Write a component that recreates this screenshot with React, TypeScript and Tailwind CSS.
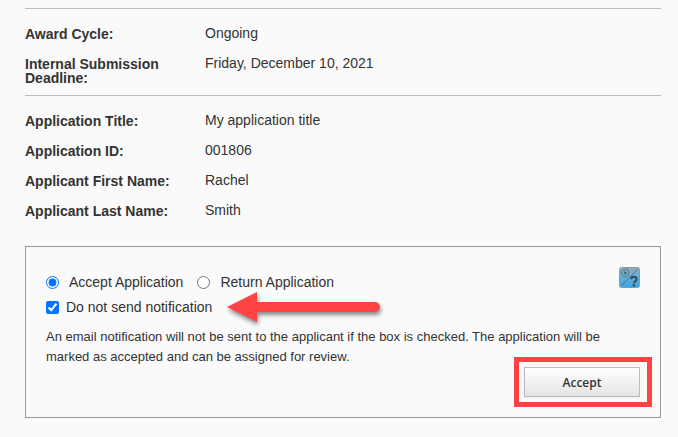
import { useState } from 'react';

type Detail = { label: string; value: string };

const cycleDetails: Detail[] = [
  { label: 'Award Cycle:', value: 'Ongoing' },
  { label: 'Internal Submission Deadline:', value: 'Friday, December 10, 2021' },
];

const applicationDetails: Detail[] = [
  { label: 'Application Title:', value: 'My application title' },
  { label: 'Application ID:', value: '001806' },
  { label: 'Applicant First Name:', value: 'Rachel' },
  { label: 'Applicant Last Name:', value: 'Smith' },
];

const DetailList = ({ items }: { items: Detail[] }) => (
  <dl className="flex flex-col gap-4 border-t border-[#bbb] pt-[18px]">
    {items.map(({ label, value }) => (
      <div key={label} className="flex items-start">
        <dt className="w-[180px] shrink-0 pr-4 font-bold leading-[14px]">{label}</dt>
        <dd className="leading-3">{value}</dd>
      </div>
    ))}
  </dl>
);

const HelpIcon = () => (
  <svg viewBox="0 0 21 21" className="size-[21px]" aria-hidden="true">
    <defs>
      <linearGradient id="help-fill" x1="0" y1="0" x2="0" y2="1">
        <stop offset="0" stopColor="#93a9b8" />
        <stop offset="0.45" stopColor="#6aaed2" />
        <stop offset="1" stopColor="#35a8e4" />
      </linearGradient>
    </defs>
    <rect x="0.5" y="0.5" width="20" height="20" rx="2" fill="url(#help-fill)" stroke="#7d9caf" />
    <path d="M2.5 18.5 18.5 2.5" stroke="#45677c" strokeWidth="0.9" />
    <circle cx="6.3" cy="6" r="3.8" fill="none" stroke="#547a92" strokeWidth="1" />
    <path d="M5.2 4v4l3.2-2z" fill="#3f647b" />
    <path d="M12.2 12.2c0-3.4 5.4-3.4 5.4 0 0 2.2-2.7 2-2.7 4" fill="none" stroke="#34495a" strokeWidth="2" />
    <circle cx="14.9" cy="18.2" r="1.2" fill="#34495a" />
  </svg>
);

const Arrow = () => (
  <svg
    viewBox="0 0 154 32"
    className="pointer-events-none absolute left-full top-1/2 ml-[15px] h-8 w-[154px] -translate-y-1/2 overflow-visible drop-shadow-[1px_3px_2px_rgba(0,0,0,0.45)]"
    aria-hidden="true"
  >
    <path d="M0 16 30 1v10h118a5 5 0 0 1 0 10H30v10z" fill="#ff4343" />
  </svg>
);

const App = () => {
  const [decision, setDecision] = useState('accept');
  const [silent, setSilent] = useState(true);

  return (
    <main className="min-h-screen bg-[#fafafa] pb-5 pl-[25px] pr-[17px] pt-2 font-['Liberation_Sans',Arial,sans-serif] text-sm text-[#333]">
      <DetailList items={cycleDetails} />
      <div className="mt-[10px]">
        <DetailList items={applicationDetails} />
      </div>

      <form
        className="mt-7 border border-[#999] pb-[10px] pl-5 pr-2 pt-5"
        onSubmit={(e) => e.preventDefault()}
      >
        <div className="flex items-start justify-between pr-3">
          <div className="flex flex-col gap-[5px] pt-[5px]">
            <div className="flex items-center gap-[14px]">
              <label className="flex items-center gap-[10px]">
                <input
                  type="radio"
                  name="decision"
                  className="size-[13px] accent-[#0075ff]"
                  checked={decision === 'accept'}
                  onChange={() => setDecision('accept')}
                />
                Accept Application
              </label>
              <label className="flex items-center gap-[10px]">
                <input
                  type="radio"
                  name="decision"
                  className="size-[13px] accent-[#0075ff]"
                  checked={decision === 'return'}
                  onChange={() => setDecision('return')}
                />
                Return Application
              </label>
            </div>
            <div className="relative self-start">
              <label className="flex items-center gap-[7px]">
                <input
                  type="checkbox"
                  className="size-[13px] accent-[#0075ff]"
                  checked={silent}
                  onChange={(e) => setSilent(e.target.checked)}
                />
                Do not send notification
              </label>
              <Arrow />
            </div>
          </div>
          <button type="button" aria-label="Help">
            <HelpIcon />
          </button>
        </div>

        <p className="mt-[10px] max-w-[580px] text-[13px] leading-5">
          An email notification will not be sent to the applicant if the box is checked. The application will be
          marked as accepted and can be assigned for review.
        </p>

        <div className="-mt-[10px] flex justify-end">
          <div className="border-[5px] border-[#ff4343] py-[5px] pl-[5px] pr-[7px]">
            <button
              type="submit"
              className="block h-[30px] w-[116px] border border-[#bbb] bg-gradient-to-b from-white to-[#e4e4e4] pt-0.5 font-['Open_Sans',sans-serif] text-xs font-semibold shadow-xs"
            >
              Accept
            </button>
          </div>
        </div>
      </form>
    </main>
  );
};

export default App;
